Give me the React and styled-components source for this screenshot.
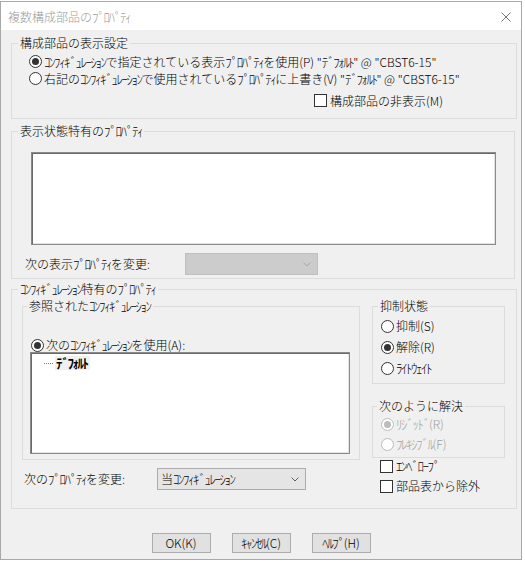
import React from 'react';
import styled, { createGlobalStyle } from 'styled-components';

const Global = createGlobalStyle`
  html, body { margin: 0; padding: 0; background: #ffffff; }
  body {
    font-family: "Noto Sans CJK JP", "Noto Sans", sans-serif;
    font-size: 12px;
    font-weight: 300;
    line-height: 14px;
    color: #000;
  }
  * { box-sizing: border-box; }
`;

const Window = styled.div`
  margin-top: 1px;
  width: 522px;
  height: 559px;
  border: 1px solid #a9a9a9;
  background: #f0f0f0;
  display: flex;
  flex-direction: column;
  overflow: hidden;
`;

const TitleBar = styled.div`
  flex: none;
  height: 28px;
  background: #ffffff;
  display: flex;
  align-items: center;
  justify-content: space-between;
  padding: 1px 10px 0 7px;
`;

const Title = styled.span`
  color: #9a9a9a;
  font-size: 12px;
`;

const CloseIcon = styled.svg`
  width: 10px;
  height: 10px;
  display: block;
`;

const Body = styled.div`
  flex: none;
  display: flex;
  flex-direction: column;
  padding: 6px 4px 0 10px;
`;

const Group = styled.fieldset`
  margin: ${p => p.$mt ?? 0}px 0 0 0;
  padding: 0 0 ${p => p.$pb ?? 0}px 0;
  min-width: 0;
  width: ${p => p.$w}px;
  border: 1px solid #dcdcdc;
  display: flex;
  flex-direction: column;
`;

const Legend = styled.legend`
  margin-left: ${p => p.$indent ?? 6}px;
  padding: 0 2px;
  height: 14px;
  line-height: 14px;
  white-space: nowrap;
`;

const Row = styled.label`
  display: flex;
  align-items: center;
  height: ${p => p.$h ?? 14}px;
  margin: ${p => p.$mt ?? 0}px 0 0 ${p => p.$ml ?? 0}px;
  white-space: nowrap;
  color: ${p => (p.$disabled ? '#a0a0a0' : '#000')};
`;

const RadioCircle = styled.span`
  flex: none;
  width: 13px;
  height: 13px;
  border-radius: 50%;
  border: 1px solid ${p => (p.$disabled ? '#bcbcbc' : '#333333')};
  background: #ffffff;
  display: inline-flex;
  align-items: center;
  justify-content: center;
  margin-right: 2px;
  &::after {
    content: '';
    width: 7px;
    height: 7px;
    border-radius: 50%;
    background: ${p => (p.$disabled ? '#bcbcbc' : '#333333')};
    display: ${p => (p.$checked ? 'block' : 'none')};
  }
`;

const CheckBox = styled.span`
  flex: none;
  width: 13px;
  height: 13px;
  border: 1px solid #333333;
  background: #ffffff;
  margin-right: 3px;
`;

const Hw = styled.span`
  font-size: 13px;
  line-height: 12px;
  letter-spacing: -1.5px;
`;

const ListBox = styled.div`
  width: ${p => p.$w}px;
  height: ${p => p.$h}px;
  margin: ${p => p.$mt ?? 0}px 0 0 ${p => p.$ml ?? 0}px;
  background: #ffffff;
  border: 1px solid #8a8a8a;
  box-shadow: inset 1px 1px 0 #6a6a6a, inset -1px -1px 0 #e3e3e3;
  padding: 3px 0 0 13px;
`;

const FieldRow = styled.div`
  display: flex;
  align-items: center;
  margin: ${p => p.$mt ?? 0}px 0 0 ${p => p.$ml ?? 0}px;
`;

const FieldLabel = styled.span`
  width: ${p => p.$w}px;
  white-space: nowrap;
`;

const Combo = styled.div`
  width: ${p => p.$w}px;
  height: 22px;
  display: flex;
  align-items: center;
  justify-content: space-between;
  padding: 0 6px 0 3px;
  background: ${p => (p.$disabled ? '#cccccc' : '#e5e5e5')};
  border: 1px solid ${p => (p.$disabled ? '#bfbfbf' : '#acacac')};
  white-space: nowrap;
`;

const Chevron = styled.svg`
  width: 8px;
  height: 5px;
  display: block;
`;

const Columns = styled.div`
  display: flex;
  align-items: flex-start;
  margin-top: 3px;
`;

const LeftCol = styled.div`
  display: flex;
  flex-direction: column;
  margin-left: 10px;
`;

const RightCol = styled.div`
  display: flex;
  flex-direction: column;
  margin-left: 12px;
`;

const TreeItem = styled.div`
  display: flex;
  align-items: center;
  height: 14px;
`;

const TreeDots = styled.span`
  width: 9px;
  height: 0;
  border-top: 1px dotted #808080;
  margin-right: 2px;
`;

const TreeText = styled.span`
  font-weight: bold;
  background: #f0f0f0;
  padding: 0 2px 0 1px;
`;

const CheckArea = styled.div`
  position: relative;
  z-index: 1;
  width: 114px;
  margin: 1px 0 -20px 8px;
  padding-bottom: 14px;
  background: #f0f0f0;
  display: flex;
  flex-direction: column;
`;

const Buttons = styled.div`
  display: flex;
  justify-content: center;
  gap: 21px;
  margin-top: 24px;
  padding-right: 6px;
`;

const Button = styled.button`
  width: 59px;
  height: 20px;
  padding: 0;
  font: inherit;
  color: #000;
  background: #e1e1e1;
  border: 1px solid #adadad;
  border-radius: 0;
`;

const HW_RE = /([\uFF61-\uFF9F]+)/;

const T = ({ children }) => {
  if (typeof children !== 'string') return children;
  return children.split(HW_RE).map((part, i) =>
    HW_RE.test(part) ? <Hw key={i}>{part}</Hw> : <React.Fragment key={i}>{part}</React.Fragment>
  );
};

const Radio = ({ checked, disabled, children, ...rest }) => (
  <Row $disabled={disabled} {...rest}>
    <RadioCircle $checked={checked} $disabled={disabled} />
    <span><T>{children}</T></span>
  </Row>
);

const Check = ({ children, ...rest }) => (
  <Row {...rest}>
    <CheckBox />
    <span><T>{children}</T></span>
  </Row>
);

const Arrow = ({ color }) => (
  <Chevron viewBox="0 0 8 5">
    <polyline points="0.5,0.5 4,4 7.5,0.5" fill="none" stroke={color} strokeWidth="1" />
  </Chevron>
);

export default function App() {
  return (
    <>
      <Global />
      <Window>
        <TitleBar>
          <Title><T>複数構成部品のﾌﾟﾛﾊﾟﾃｨ</T></Title>
          <CloseIcon viewBox="0 0 10 10">
            <path d="M0.5 0.5 L9.5 9.5 M9.5 0.5 L0.5 9.5" stroke="#777" strokeWidth="1" fill="none" />
          </CloseIcon>
        </TitleBar>
        <Body>
          <Group $w={506} $pb={9}>
            <Legend>構成部品の表示設定</Legend>
            <Radio checked $h={17} $mt={3} $ml={17}>
              ｺﾝﾌｨｷﾞｭﾚｰｼｮﾝで指定されている表示ﾌﾟﾛﾊﾟﾃｨを使用(P) "ﾃﾞﾌｫﾙﾄ" @ "CBST6-15"
            </Radio>
            <Radio $h={17} $ml={17}>
              右記のｺﾝﾌｨｷﾞｭﾚｰｼｮﾝで使用されているﾌﾟﾛﾊﾟﾃｨに上書き(V) "ﾃﾞﾌｫﾙﾄ" @ "CBST6-15"
            </Radio>
            <Check $h={17} $mt={5} $ml={302}>構成部品の非表示(M)</Check>
          </Group>

          <Group $w={504} $mt={5} $pb={3}>
            <Legend><T>表示状態特有のﾌﾟﾛﾊﾟﾃｨ</T></Legend>
            <ListBox $w={465} $h={93} $mt={14} $ml={19} />
            <FieldRow $mt={8} $ml={13}>
              <FieldLabel $w={160}><T>次の表示ﾌﾟﾛﾊﾟﾃｨを変更:</T></FieldLabel>
              <Combo $w={133} $disabled>
                <span />
                <Arrow color="#a8a8a8" />
              </Combo>
            </FieldRow>
          </Group>

          <Group $w={506} $mt={3} $pb={18}>
            <Legend><T>ｺﾝﾌｨｷﾞｭﾚｰｼｮﾝ特有のﾌﾟﾛﾊﾟﾃｨ</T></Legend>
            <Columns>
              <LeftCol>
                <Group $w={338} $pb={5}>
                  <Legend $indent={4}><T>参照されたｺﾝﾌｨｷﾞｭﾚｰｼｮﾝ</T></Legend>
                  <Radio checked $mt={25} $ml={8}>次のｺﾝﾌｨｷﾞｭﾚｰｼｮﾝを使用(A):</Radio>
                  <ListBox $w={320} $h={102} $ml={7}>
                    <TreeItem>
                      <TreeDots />
                      <TreeText><T>ﾃﾞﾌｫﾙﾄ</T></TreeText>
                    </TreeItem>
                  </ListBox>
                </Group>
                <FieldRow $mt={8} $ml={2}>
                  <FieldLabel $w={133}><T>次のﾌﾟﾛﾊﾟﾃｨを変更:</T></FieldLabel>
                  <Combo $w={149}>
                    <span><T>当ｺﾝﾌｨｷﾞｭﾚｰｼｮﾝ</T></span>
                    <Arrow color="#606060" />
                  </Combo>
                </FieldRow>
              </LeftCol>
              <RightCol>
                <Group $w={133} $pb={8}>
                  <Legend $indent={5}>抑制状態</Legend>
                  <Radio $mt={6} $ml={8}>抑制(S)</Radio>
                  <Radio checked $mt={7} $ml={8}>解除(R)</Radio>
                  <Radio $mt={7} $ml={8}>ﾗｲﾄｳｪｲﾄ</Radio>
                </Group>
                <Group $w={133} $mt={15} $pb={6}>
                  <Legend $indent={4}>次のように解決</Legend>
                  <Radio checked disabled $mt={4} $ml={8}>ﾘｼﾞｯﾄﾞ(R)</Radio>
                  <Radio disabled $mt={6} $ml={8}>ﾌﾚｷｼﾌﾞﾙ(F)</Radio>
                </Group>
                <CheckArea>
                  <Check>ｴﾝﾍﾞﾛｰﾌﾟ</Check>
                  <Check $mt={6}>部品表から除外</Check>
                </CheckArea>
              </RightCol>
            </Columns>
          </Group>

          <Buttons>
            <Button>OK(K)</Button>
            <Button><T>ｷｬﾝｾﾙ(C)</T></Button>
            <Button><T>ﾍﾙﾌﾟ(H)</T></Button>
          </Buttons>
        </Body>
      </Window>
    </>
  );
}
